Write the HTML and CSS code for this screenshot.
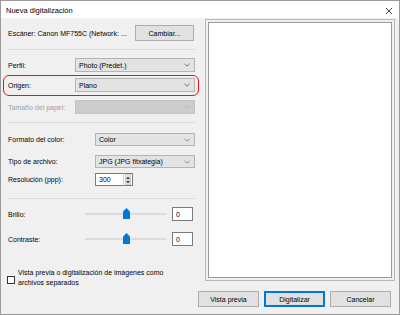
FILE: index.html
```html
<!DOCTYPE html>
<html lang="es">
<head>
  <meta charset="UTF-8" />
  <title>Nueva digitalización</title>
  <link rel="stylesheet" href="styles.css">
</head>
<body>
  <div class="dialog">
    <div class="titlebar">
      <span class="title">Nueva digitalización</span>
      <svg class="close" width="8" height="8" viewBox="0 0 8 8">
        <path d="M1 1 L7 7 M7 1 L1 7" stroke="#333" stroke-width="0.9" fill="none"/>
      </svg>
    </div>

    <div class="main">
      <div class="settings">
        <div class="scanner-row">
          <span>Escáner: Canon MF755C (Network: ...</span>
          <button class="btn change">Cambiar...</button>
        </div>
        <div class="sep sep-1"></div>

        <div class="row row-perfil">
          <span class="label w1">Perfil:</span>
          <div class="select">Photo (Predet.)
            <svg class="chev" width="6" height="4" viewBox="0 0 6 4"><path d="M0.5 0.8 L3 3.2 L5.5 0.8" stroke="#555" stroke-width="0.8" fill="none"/></svg>
          </div>
        </div>
        <div class="row row-origen">
          <span class="label w1">Origen:</span>
          <div class="select">Plano
            <svg class="chev" width="6" height="4" viewBox="0 0 6 4"><path d="M0.5 0.8 L3 3.2 L5.5 0.8" stroke="#555" stroke-width="0.8" fill="none"/></svg>
          </div>
        </div>
        <div class="row row-papel">
          <span class="label w1 disabled">Tamaño del papel:</span>
          <div class="select is-disabled">
            <svg class="chev" width="6" height="4" viewBox="0 0 6 4"><path d="M0.5 0.8 L3 3.2 L5.5 0.8" stroke="#b5b5b5" stroke-width="0.8" fill="none"/></svg>
          </div>
        </div>
        <div class="sep sep-2"></div>

        <div class="row row-formato small">
          <span class="label w2">Formato del color:</span>
          <div class="select">Color
            <svg class="chev" width="6" height="4" viewBox="0 0 6 4"><path d="M0.5 0.8 L3 3.2 L5.5 0.8" stroke="#777" stroke-width="0.8" fill="none"/></svg>
          </div>
        </div>
        <div class="row row-tipo small">
          <span class="label w2">Tipo de archivo:</span>
          <div class="select">JPG (JPG fitxategia)
            <svg class="chev" width="6" height="4" viewBox="0 0 6 4"><path d="M0.5 0.8 L3 3.2 L5.5 0.8" stroke="#777" stroke-width="0.8" fill="none"/></svg>
          </div>
        </div>
        <div class="row row-res small">
          <span class="label w2">Resolución (ppp):</span>
          <div class="number">300</div>
          <div class="spinner">
            <span class="spin"><svg width="4" height="3" viewBox="0 0 4 3"><path d="M0 3 L2 0.5 L4 3 Z" fill="#444"/></svg></span>
            <span class="spin"><svg width="4" height="3" viewBox="0 0 4 3"><path d="M0 0 L2 2.5 L4 0 Z" fill="#444"/></svg></span>
          </div>
        </div>
        <div class="sep sep-3"></div>

        <div class="row row-brillo">
          <span class="label w3">Brillo:</span>
          <div class="slider">
            <div class="track"></div>
            <svg class="thumb" width="7" height="11" viewBox="0 0 7 11"><path d="M0 3.5 L3.5 0 L7 3.5 V11 H0 Z" fill="#0078d7"/></svg>
          </div>
          <div class="value">0</div>
        </div>
        <div class="row row-contraste">
          <span class="label w3">Contraste:</span>
          <div class="slider">
            <div class="track"></div>
            <svg class="thumb" width="7" height="11" viewBox="0 0 7 11"><path d="M0 3.5 L3.5 0 L7 3.5 V11 H0 Z" fill="#0078d7"/></svg>
          </div>
          <div class="value">0</div>
        </div>

        <div class="check-row">
          <span class="checkbox"></span>
          <span class="check-text">Vista previa o digitalización de imágenes como<br>archivos separados</span>
        </div>
      </div>

      <div class="preview">
        <div class="preview-inner"></div>
      </div>
    </div>

    <div class="actions">
      <button class="btn">Vista previa</button>
      <button class="btn default">Digitalizar</button>
      <button class="btn">Cancelar</button>
    </div>

    <div class="highlight"></div>
  </div>
</body>
</html>
```

FILE: styles.css
```css
* {
  box-sizing: border-box;
}

body {
  margin: 0;
  font-family: "Liberation Sans", Arial, sans-serif;
  font-size: 7px;
  color: #000;
  background: #fff;
}

.dialog {
  position: relative;
  width: 400px;
  height: 315px;
  border: 1px solid #9a9a9a;
  background: #f0f0f0;
  display: flex;
  flex-direction: column;
}

.titlebar {
  height: 17px;
  background: #fff;
  display: flex;
  align-items: center;
  justify-content: space-between;
  padding: 0 6px 0 5px;
}

.title {
  font-size: 7.5px;
  margin-top: 1px;
}

.close {
  margin-top: 2px;
}

.main {
  display: flex;
  height: 270px;
}

.settings {
  width: 187px;
  margin-left: 7px;
  display: flex;
  flex-direction: column;
}

.scanner-row {
  margin-top: 7px;
  height: 16px;
  display: flex;
  align-items: center;
  justify-content: space-between;
}

.btn {
  font-family: inherit;
  font-size: 7px;
  color: #000;
  height: 16px;
  width: 61px;
  padding: 0;
  background: #e1e1e1;
  border: 1px solid #adadad;
  border-radius: 0;
}

.btn.change {
  width: 59px;
  margin-right: 1px;
}

.btn.default {
  border: 1px solid #0078d7;
  box-shadow: inset 0 0 0 1px #0078d7;
}

.sep {
  height: 1px;
  background: #dadada;
}

.sep-1 { margin-top: 8px; }
.sep-2 { margin-top: 8px; }
.sep-3 { margin-top: 12px; }

.row {
  display: flex;
  align-items: center;
  height: 14px;
}

.row-perfil { margin-top: 8px; }
.row-origen { margin-top: 6px; }
.row-papel { margin-top: 8px; }
.row-formato { margin-top: 10px; }
.row-tipo { margin-top: 9px; }
.row-res { margin-top: 5px; }
.row-brillo { margin-top: 8px; }
.row-contraste { margin-top: 11px; }

.row.small {
  height: 13px;
}

.label {
  flex: none;
}

.label.w1 { width: 67px; }
.label.w2 { width: 87px; }
.label.w3 { width: 77px; }

.label.disabled {
  color: #a0a0a0;
}

.select {
  flex: 1;
  height: 100%;
  background: #e3e3e3;
  border: 1px solid #b4b4b4;
  display: flex;
  align-items: center;
  justify-content: space-between;
  padding: 0 4px 0 3px;
}

.select.is-disabled {
  background: #cccccc;
  border-color: #c4c4c4;
  justify-content: flex-end;
}

.number {
  width: 28px;
  height: 100%;
  background: #fff;
  border: 1px solid #7a7a7a;
  border-right: none;
  padding-left: 3px;
  display: flex;
  align-items: center;
}

.spinner {
  width: 10px;
  height: 100%;
  display: flex;
  flex-direction: column;
  border: 1px solid #7a7a7a;
  border-left: 1px solid #d0d0d0;
  background: #fff;
  padding: 0 1px;
}

.spin {
  flex: 1;
  display: flex;
  align-items: center;
  justify-content: center;
  background: #e6e6e6;
  border: 1px solid #cfcfcf;
}

.spin + .spin {
  border-top: none;
}

.slider {
  position: relative;
  width: 82px;
  height: 100%;
  display: flex;
  align-items: center;
}

.track {
  width: 100%;
  height: 2px;
  background: repeating-linear-gradient(to right, #d2d2d2 0 1px, #e6e6e6 1px 2px);
}

.thumb {
  position: absolute;
  left: 38px;
  top: 1px;
}

.value {
  width: 21px;
  height: 100%;
  margin-left: 5px;
  background: #fff;
  border: 1px solid #7a7a7a;
  padding-left: 3px;
  display: flex;
  align-items: center;
}

.check-row {
  margin-top: 22px;
  display: flex;
  align-items: center;
}

.checkbox {
  flex: none;
  width: 8px;
  height: 8px;
  background: #fff;
  border: 1px solid #333;
  margin: 3px 3px 0 -1px;
}

.check-text {
  line-height: 10px;
}

.preview {
  margin: 1px 4px 0 10px;
  width: 190px;
  height: 262px;
  border: 1px solid #b9b9b9;
  padding: 2px;
}

.preview-inner {
  height: 100%;
  background: #fff;
  border: 1px solid #9a9a9a;
}

.actions {
  margin-top: 3px;
  display: flex;
  justify-content: flex-end;
  gap: 5px;
  padding-right: 8px;
}

.highlight {
  position: absolute;
  left: 2px;
  top: 74px;
  width: 196px;
  height: 21px;
  border: 1.5px solid #e8121b;
  border-radius: 6px;
}
```
